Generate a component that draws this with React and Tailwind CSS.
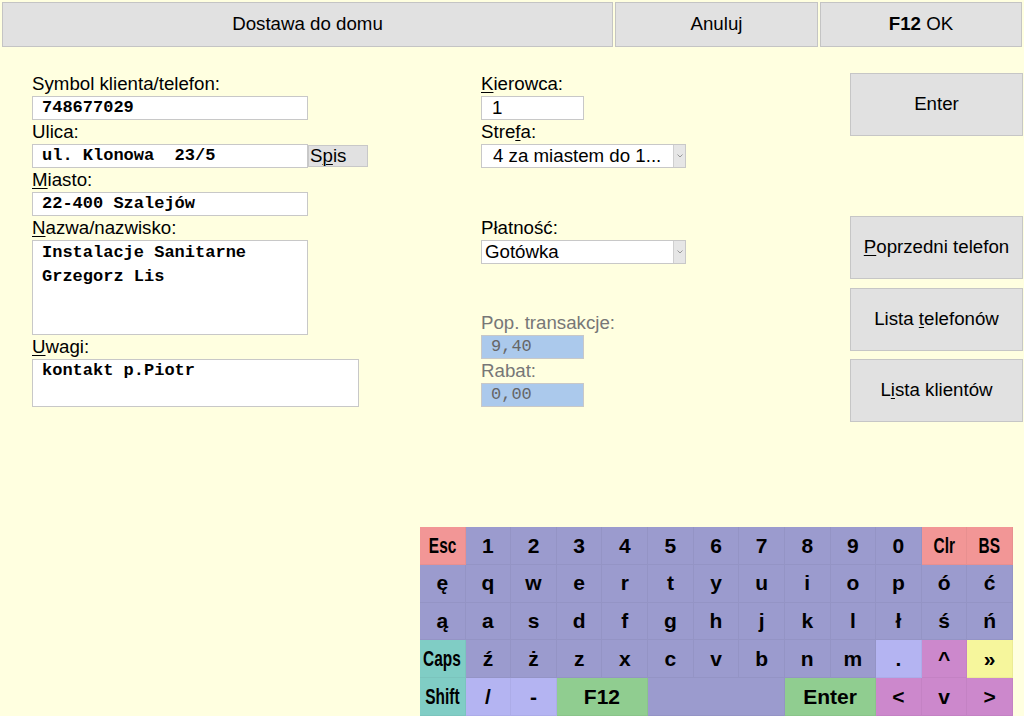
import React from "react";

const SANS = { fontFamily: '"Liberation Sans", Arial, sans-serif' };
const MONO = { fontFamily: '"Liberation Mono", "Courier New", monospace' };

function Label({ children, gray }) {
  return (
    <div
      className={`h-[24px] leading-[24px] text-[18.7px] ${gray ? "text-[#777777]" : "text-black"}`}
      style={SANS}
    >
      {children}
    </div>
  );
}

function U({ children }) {
  return <span className="underline underline-offset-[2px] decoration-1">{children}</span>;
}

function TextBox({ value, w, blue }) {
  return (
    <div
      className={`${w} h-[24px] border border-[#c8c8c8] ${blue ? "bg-[#abc9ec] text-[#666666] font-normal" : "bg-white text-black font-bold"} pl-[9px] text-[17px] leading-[22px] whitespace-pre`}
      style={MONO}
    >
      {value}
    </div>
  );
}

function Select({ value, center }) {
  return (
    <div className="w-[205px] h-[24px] border border-[#c8c8c8] bg-white flex items-stretch">
      <div
        className={`flex-1 text-[18.7px] leading-[22px] text-black ${center ? "pl-[11px]" : "pl-[3px]"}`}
        style={SANS}
      >
        {value}
      </div>
      <div className="w-[12px] bg-[#e6e6e6] border-l border-[#cfcfcf] flex items-center justify-center">
        <svg width="6" height="4" viewBox="0 0 6 4">
          <path d="M0.5 0.5 L3 3 L5.5 0.5" stroke="#999" strokeWidth="1" fill="none" />
        </svg>
      </div>
    </div>
  );
}

function SideButton({ children, className = "" }) {
  return (
    <div
      className={`w-[173px] h-[63px] bg-[#e1e1e1] border border-[#c6c6c6] flex items-center justify-center text-[18.7px] text-black ${className}`}
      style={SANS}
    >
      {children}
    </div>
  );
}

const C = {
  p: "bg-[#9b9bce]",
  r: "bg-[#f29696]",
  t: "bg-[#80cdc5]",
  l: "bg-[#b4b4f2]",
  g: "bg-[#90cd90]",
  o: "bg-[#cc88cc]",
  y: "bg-[#f6f69c]",
};

const rows = [
  [["Esc", "r", 1, true], ["1"], ["2"], ["3"], ["4"], ["5"], ["6"], ["7"], ["8"], ["9"], ["0"], ["Clr", "r", 1, true], ["BS", "r", 1, true]],
  [["ę"], ["q"], ["w"], ["e"], ["r"], ["t"], ["y"], ["u"], ["i"], ["o"], ["p"], ["ó"], ["ć"]],
  [["ą"], ["a"], ["s"], ["d"], ["f"], ["g"], ["h"], ["j"], ["k"], ["l"], ["ł"], ["ś"], ["ń"]],
  [["Caps", "t", 1, true], ["ź"], ["ż"], ["z"], ["x"], ["c"], ["v"], ["b"], ["n"], ["m"], [".", "l"], ["^", "o"], ["»", "y"]],
  [["Shift", "t", 1, true], ["/", "l"], ["-", "l"], ["F12", "g", 2], ["", "p", 3], ["Enter", "g", 2], ["<", "o"], ["v", "o"], [">", "o"]],
];

const spanCls = { 1: "col-span-1", 2: "col-span-2", 3: "col-span-3" };

function Keyboard() {
  return (
    <div className="ml-[420px] w-[593px] h-[189px] grid grid-cols-13 grid-rows-5">
      {rows.flatMap((row, ri) =>
        row.map(([label, color = "p", span = 1, narrow], ki) => (
          <div
            key={`${ri}-${ki}`}
            className={`${C[color]} ${spanCls[span]} border-r border-b border-black/[0.04] flex items-center justify-center font-bold text-black ${narrow ? "text-[22px]" : "text-[21px]"}`}
            style={SANS}
          >
            {narrow ? (
              <span className="inline-block scale-x-[0.7]">{label}</span>
            ) : (
              label
            )}
          </div>
        ))
      )}
    </div>
  );
}

export default function App() {
  return (
    <div className="w-[1024px] h-[716px] bg-[#ffffe0] flex flex-col overflow-hidden" style={SANS}>
      {/* top bar */}
      <div className="flex gap-[2px] px-[2px] pt-[2px] h-[47px]">
        <div className="w-[611px] h-[45px] bg-[#e1e1e1] border border-[#c4c4c4] flex items-center justify-center text-[18.7px]">
          Dostawa do domu
        </div>
        <div className="w-[203px] h-[45px] bg-[#e1e1e1] border border-[#c4c4c4] flex items-center justify-center text-[18.7px]">
          Anuluj
        </div>
        <div className="w-[202px] h-[45px] bg-[#e1e1e1] border border-[#c4c4c4] flex items-center justify-center text-[18.7px]">
          <span className="font-bold">F12</span>&nbsp;OK
        </div>
      </div>

      {/* main */}
      <div className="flex flex-1">
        {/* left */}
        <div className="ml-[32px] w-[336px] pt-[25px] flex flex-col">
          <Label>Symbol klienta/telefon:</Label>
          <TextBox w="w-[276px]" value="748677029" />
          <Label>Ulica:</Label>
          <div className="flex items-start">
            <TextBox w="w-[276px]" value="ul. Klonowa  23/5" />
            <div className="w-[60px] h-[22px] mt-[1px] bg-[#e1e1e1] border border-[#c8c8c8] text-[18.7px] leading-[20px] pl-[1px]">
              S<U>p</U>is
            </div>
          </div>
          <Label>
            <U>M</U>iasto:
          </Label>
          <TextBox w="w-[276px]" value="22-400 Szalejów" />
          <Label>
            <U>N</U>azwa/nazwisko:
          </Label>
          <div
            className="w-[276px] h-[95px] bg-white border border-[#c8c8c8] pl-[9px] text-[17px] leading-[24px] font-bold text-black"
            style={MONO}
          >
            <div>Instalacje Sanitarne</div>
            <div>Grzegorz Lis</div>
          </div>
          <Label>
            <U>U</U>wagi:
          </Label>
          <div
            className="w-[327px] h-[48px] bg-white border border-[#c8c8c8] pl-[9px] text-[17px] leading-[22px] font-bold text-black"
            style={MONO}
          >
            kontakt p.Piotr
          </div>
        </div>

        {/* middle */}
        <div className="ml-[113px] w-[205px] pt-[25px] flex flex-col">
          <Label>
            <U>K</U>ierowca:
          </Label>
          <div
            className="w-[103px] h-[24px] bg-white border border-[#c8c8c8] pl-[10px] text-[18.7px] leading-[22px]"
            style={SANS}
          >
            1
          </div>
          <Label>
            Stre<U>f</U>a:
          </Label>
          <Select value="4 za miastem do 1..." center />
          <div className="h-[48px]" />
          <Label>Płatność:</Label>
          <Select value="Gotówka" />
          <div className="h-[47px]" />
          <Label gray>Pop. transakcje:</Label>
          <TextBox w="w-[103px]" value="9,40" blue />
          <Label gray>Rabat:</Label>
          <TextBox w="w-[103px]" value="0,00" blue />
        </div>

        {/* right */}
        <div className="ml-[164px] pt-[26px] flex flex-col">
          <SideButton>Enter</SideButton>
          <SideButton className="mt-[80px]">
            <span>
              <U>P</U>oprzedni telefon
            </span>
          </SideButton>
          <SideButton className="mt-[9px]">
            <span>
              Lista <U>t</U>elefonów
            </span>
          </SideButton>
          <SideButton className="mt-[8px]">
            <span>
              L<U>i</U>sta klientów
            </span>
          </SideButton>
        </div>
      </div>

      <Keyboard />
    </div>
  );
}
